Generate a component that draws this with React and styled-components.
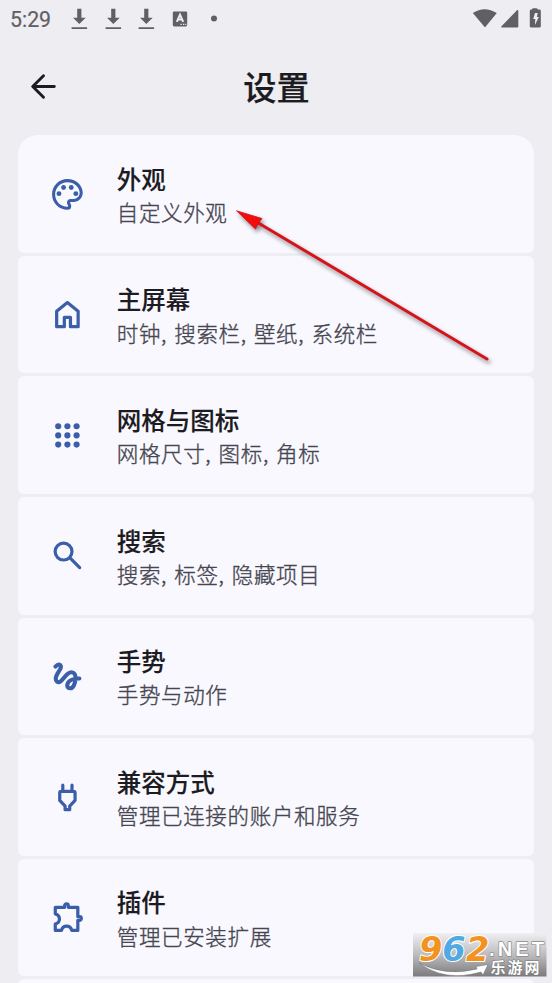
import React from 'react';
import styled, { createGlobalStyle } from 'styled-components';

const Global = createGlobalStyle`
  html, body { margin: 0; padding: 0; background: #eeedf2; overflow: hidden; }
  * { box-sizing: border-box; }
`;

const Screen = styled.div`
  position: relative;
  width: 552px;
  height: 983px;
  overflow: hidden;
  display: flex;
  flex-direction: column;
  background: #eeedf2;
  font-family: 'Noto Sans CJK SC', sans-serif;
`;

const StatusBar = styled.header`
  height: 38px;
  flex: none;
  display: flex;
  align-items: center;
  justify-content: space-between;
  padding: 0 8px 0 10px;
  color: #606063;
`;

const StatusGroup = styled.div`
  display: flex;
  align-items: center;
`;

const Clock = styled.span`
  width: 58px;
  padding-top: 2px;
  font: 400 21.3px/38px Roboto, sans-serif;
  -webkit-text-stroke: 0.2px #606063;
`;

const StatusSvg = styled.svg`
  display: block;
  fill: currentColor;
`;

const TitleBar = styled.div`
  height: 97.3px;
  flex: none;
  display: grid;
  grid-template-columns: 86px 1fr 86px;
  align-items: center;
`;

const BackButton = styled.button`
  border: 0;
  padding: 0 0 0 24.5px;
  background: none;
  display: flex;
  color: #1b1b21;
`;

const Heading = styled.h1`
  margin: 0;
  padding: 0 0 2px 1px;
  text-align: center;
  font-size: 33.2px;
  font-weight: 500;
  line-height: 50px;
  color: #1b1b21;
  -webkit-text-stroke: 0.25px #1b1b21;
`;

const List = styled.main`
  display: flex;
  flex-direction: column;
  flex: none;
  gap: 3.1px;
  padding: 0 18.4px;
`;

const Card = styled.section`
  height: 117.5px;
  flex: none;
  display: flex;
  align-items: center;
  padding-left: 30.4px;
  background: #faf8ff;
  border-radius: ${(p) => (p.$first ? '20px 20px 6px 6px' : '6px')};
`;

const CardIcon = styled.svg`
  width: 36.8px;
  height: 36.8px;
  flex: none;
  fill: none;
  stroke: #3a5fa8;
  stroke-width: 2.1;
  stroke-linecap: round;
  stroke-linejoin: round;
`;

const CardText = styled.div`
  margin-left: 31.2px;
`;

const CardTitle = styled.h2`
  margin: 0;
  padding-top: 0.5px;
  font-size: 24.5px;
  font-weight: 500;
  line-height: 36.3px;
  color: #1b1b21;
  -webkit-text-stroke: 0.15px #1b1b21;
`;

const CardSummary = styled.p`
  margin: 0;
  font-size: 21.5px;
  font-weight: 300;
  letter-spacing: 0.65px;
  word-spacing: 1.8px;
  line-height: 30.7px;
  color: #45464f;
  -webkit-text-stroke: 0.35px #45464f;
`;

const Pointer = styled.svg`
  position: absolute;
  left: 0;
  top: 0;
  pointer-events: none;
  filter: drop-shadow(2px 3px 2px rgba(0, 0, 0, 0.45));
`;

const Watermark = styled.svg`
  position: absolute;
  left: 413px;
  top: 933px;
  overflow: visible;
`;

const icons = {
  palette: (
    <g fill="#3a5fa8" stroke="none">
      <path d="M12 22C6.49 22 2 17.51 2 12S6.49 2 12 2s10 4.04 10 9c0 3.31-2.69 6-6 6h-1.77c-.28 0-.5.22-.5.5 0 .12.05.23.13.33.41.47.64 1.06.64 1.67A2.5 2.5 0 0 1 12 22zm0-18c-4.41 0-8 3.59-8 8s3.59 8 8 8c.28 0 .5-.22.5-.5a.54.54 0 0 0-.14-.35c-.41-.46-.63-1.05-.63-1.65a2.5 2.5 0 0 1 2.5-2.5H16c2.21 0 4-1.79 4-4 0-3.86-3.59-7-8-7z" />
      <circle cx="6.5" cy="11.5" r="1.6" />
      <circle cx="9.5" cy="7.5" r="1.6" />
      <circle cx="14.5" cy="7.5" r="1.6" />
      <circle cx="17.5" cy="11.5" r="1.6" />
    </g>
  ),
  home: <path d="M5 10 12 4.3 19 10V20H14V14H10V20H5Z" />,
  grid: (
    <g fill="#3a5fa8" stroke="none">
      {[6, 12, 18].map((y) => [6, 12, 18].map((x) => <circle key={`${x}-${y}`} cx={x} cy={y} r="2" />))}
    </g>
  ),
  search: (
    <>
      <circle cx="9.5" cy="9.5" r="5.5" />
      <path d="m14 14 6 6" />
    </>
  ),
  gesture: (
    <path
      strokeWidth="2.7"
      d="M4.2 5.6C5.2 4.5 6 4.2 6.6 4.3 7.8 4.5 8 5.6 7.5 6.8 6.9 8.4 4.5 11 4.4 13.5 4.3 15.3 5.7 16 7 15.6 9.3 14.8 11.2 9.3 14.6 9.3 16.6 9.3 17.4 11 17.3 13.2 17.1 17 15.7 19.7 13.8 19.7 12.5 19.7 11.8 18.8 11.9 17.7 12.1 15.3 14.6 13.3 19.8 13.4"
    />
  ),
  plug: <path d="M9 4V8M15 4V8M7 9Q7 8 8 8H16Q17 8 17 9V14L13.5 17.7V20H10.5V17.7L7 14Z" />,
  extension: (
    <path d="M4.1 5.4H10.2V4.4A1.2 1.2 0 0 1 12.6 4.4V5.4H18.8V11.5H19.9A1.2 1.2 0 0 1 19.9 13.9H18.8V20.5H14.9C14.4 18.8 13.1 17.7 11.5 17.7S8.6 18.8 8.1 20.5H4.1V16.3C5.8 15.8 6.8 14.6 6.8 13S5.8 10.2 4.1 9.7Z" />
  ),
};

const settings = [
  ['palette', '外观', '自定义外观'],
  ['home', '主屏幕', '时钟, 搜索栏, 壁纸, 系统栏'],
  ['grid', '网格与图标', '网格尺寸, 图标, 角标'],
  ['search', '搜索', '搜索, 标签, 隐藏项目'],
  ['gesture', '手势', '手势与动作'],
  ['plug', '兼容方式', '管理已连接的账户和服务'],
  ['extension', '插件', '管理已安装扩展'],
];

const DownloadIcon = () => (
  <StatusSvg width="33.7" height="24" viewBox="0 0 33.7 24">
    <path d="M9.2 1.8h4.2v9h4.3l-6.4 6.3L5 10.8h4.2zM3.6 20.2h15.5v1.8H3.6z" />
  </StatusSvg>
);

export default function App() {
  return (
    <>
      <Global />
      <Screen>
        <StatusBar>
          <StatusGroup>
            <Clock>5:29</Clock>
            <DownloadIcon />
            <DownloadIcon />
            <DownloadIcon />
            <StatusSvg width="50" height="24" viewBox="0 0 50 24">
              <rect x="3.8" y="4.4" width="14.4" height="15" rx="1.4" />
              <path d="M7.8 14.8 11 7.6 14.2 14.8M9 12.6h4" fill="none" stroke="#eeedf2" strokeWidth="2" />
              <path d="M11.5 16.8h1.3v1.2h-1.3zM14 16.8h1.3v1.2H14zM16.3 16.8h1.1v1.2h-1.1z" fill="#eeedf2" />
              <circle cx="45" cy="11.6" r="3" />
            </StatusSvg>
          </StatusGroup>
          <StatusSvg width="72" height="24" viewBox="0 0 72 24">
            <path d="M.8 6.1Q12.5-1.8 24.8 6.1L13.6 19.8Q13 20.5 12.4 19.8Z" />
            <path d="M46.3 4v15.2q0 1.2-1.2 1.2H30q-1.6 0-.5-1.2L44.8 3.4q1.5-1.2 1.5.6z" />
            <path d="M60 2.6q0-1.4 1.4-1.4h2.8q1.4 0 1.4 1.4h1.8q1.4 0 1.4 1.4v15.1q0 1.5-1.4 1.5h-8.2q-1.4 0-1.4-1.5V4q0-1.4 1.4-1.4z" />
            <path d="M63 6h2.7l-.8 4h2l-4 8 .4-6h-2.1z" fill="#eeedf2" />
          </StatusSvg>
        </StatusBar>
        <TitleBar>
          <BackButton aria-label="返回">
            <svg width="37" height="37" viewBox="0 0 24 24" fill="none" stroke="currentColor" strokeWidth="1.9" strokeLinecap="round" strokeLinejoin="round">
              <path d="M19 12H5.2M12 5l-7 7 7 7" />
            </svg>
          </BackButton>
          <Heading>设置</Heading>
        </TitleBar>
        <List>
          {settings.map(([icon, title, summary], i) => (
            <Card key={icon} $first={i === 0}>
              <CardIcon viewBox="0 0 24 24">{icons[icon]}</CardIcon>
              <CardText>
                <CardTitle>{title}</CardTitle>
                <CardSummary>{summary}</CardSummary>
              </CardText>
            </Card>
          ))}
          <Card />
        </List>
        <Pointer width="552" height="400" viewBox="0 0 552 400">
          <path d="M255 221 487 359" stroke="#d4141a" strokeWidth="3" strokeLinecap="round" />
          <path d="M236.5 210.8 262 218.5 258.5 223 255.5 229Z" fill="#f20d0d" stroke="#c9151a" strokeWidth=".8" />
        </Pointer>
        <Watermark width="134" height="44" viewBox="0 0 134 44">
          <defs>
            <linearGradient id="plate" x1="0" y1="0" x2="0" y2="1">
              <stop offset="0" stopColor="#f0eff2" />
              <stop offset=".5" stopColor="#bcbcbe" />
              <stop offset="1" stopColor="#7b7b7d" />
            </linearGradient>
          </defs>
          <rect width="133.5" height="43.5" fill="url(#plate)" />
          <g fontWeight="700" stroke="#fff" paintOrder="stroke" strokeLinejoin="round">
            <g fontFamily="'DejaVu Sans', sans-serif" fontStyle="italic" fontSize="33.5" strokeWidth="2">
              <text x="6" y="28.3" fill="#f39220">9</text>
              <text x="29.3" y="28.3" fill="#50a9e2">6</text>
              <text x="53" y="28.3" fill="#f39220">2</text>
            </g>
            <text x="76" y="23" fontFamily="'Liberation Sans', sans-serif" fontSize="20" textLength="55" lengthAdjust="spacing" fill="#fff" stroke="#8a8a8c" strokeWidth="1.4">.NET</text>
            <text x="77.5" y="40" fontSize="15" textLength="49" fontFamily="'Noto Sans CJK SC', sans-serif" fill="#fff" stroke="#777" strokeWidth="1.2">乐游网</text>
          </g>
          <path d="M6 30Q33 44 64 36L63 33.5 75 31.5 70 42 68 39Q32 49.5 6 30Z" fill="#fff" stroke="#777" strokeWidth=".6" />
        </Watermark>
      </Screen>
    </>
  );
}
